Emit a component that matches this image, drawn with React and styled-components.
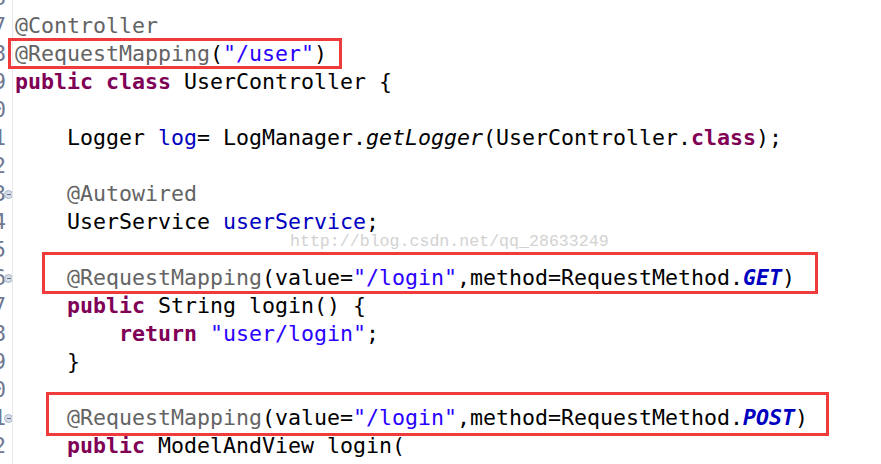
import React from "react";
import styled, { createGlobalStyle } from "styled-components";

const Global = createGlobalStyle`
  html, body { margin: 0; padding: 0; background: #ffffff; overflow: hidden; }
  #root { width: 881px; height: 464px; }
`;

const Editor = styled.div`
  position: relative;
  width: 881px;
  height: 464px;
  overflow: hidden;
  background: #ffffff;
  font-family: "DejaVu Sans Mono", "Liberation Mono", monospace;
  font-size: 21.6px;
`;

const Lines = styled.div`
  display: flex;
  flex-direction: column;
  margin-top: -16.5px;
`;

const Row = styled.div`
  display: flex;
  height: 28px;
  line-height: 28px;
`;

const Gutter = styled.div`
  position: relative;
  flex: 0 0 13px;
  display: flex;
  justify-content: flex-end;
  overflow: hidden;
  border-right: 1px solid #e8e8e8;
  padding-right: 6px;
  box-sizing: border-box;
  color: #6f7891;
`;

const LineNo = styled.span`
  flex: 0 0 auto;
`;

const Fold = styled.span`
  position: absolute;
  left: 4px;
  top: 10px;
  width: 7px;
  height: 7px;
  border-radius: 50%;
  background: #d6dde8;
  border: 1px solid #a9b6c9;
  &::after {
    content: "";
    position: absolute;
    left: 1.5px;
    right: 1.5px;
    top: 3px;
    height: 1px;
    background: #5f6f8a;
  }
`;

const Code = styled.div`
  padding-left: 2px;
  white-space: pre;
  color: #000000;
`;

const Tok = styled.span`
  color: ${(p) =>
    p.$k === "kw" ? "#7f0055" :
    p.$k === "ann" ? "#646464" :
    p.$k === "str" ? "#2a00ff" :
    p.$k === "field" || p.$k === "const" ? "#0000c0" : "#000000"};
  font-weight: ${(p) => (p.$k === "kw" || p.$k === "const" ? "bold" : "normal")};
  font-style: ${(p) => (p.$k === "it" || p.$k === "const" ? "italic" : "normal")};
`;

const Highlight = styled.div`
  position: absolute;
  box-sizing: border-box;
  border: 3px solid #ef3b3b;
  pointer-events: none;
`;

const Watermark = styled.div`
  position: absolute;
  left: 290px;
  top: 232px;
  font-family: "Liberation Mono", monospace;
  font-size: 16.6px;
  line-height: 20px;
  color: #d2d2d2;
  pointer-events: none;
`;

const lines = [
  { n: 6, t: [] },
  { n: 7, t: [["ann", "@Controller"]] },
  { n: 8, t: [["ann", "@RequestMapping"], ["", "("], ["str", "\"/user\""], ["", ")"]] },
  { n: 9, t: [["kw", "public"], ["", " "], ["kw", "class"], ["", " UserController {"]] },
  { n: 10, t: [] },
  {
    n: 11,
    t: [
      ["", "    Logger "], ["field", "log"], ["", "= LogManager."], ["it", "getLogger"],
      ["", "(UserController."], ["kw", "class"], ["", ");"],
    ],
  },
  { n: 12, t: [] },
  { n: 13, fold: true, t: [["", "    "], ["ann", "@Autowired"]] },
  { n: 14, t: [["", "    UserService "], ["field", "userService"], ["", ";"]] },
  { n: 15, t: [] },
  {
    n: 16,
    fold: true,
    t: [
      ["", "    "], ["ann", "@RequestMapping"], ["", "(value="], ["str", "\"/login\""],
      ["", ",method=RequestMethod."], ["const", "GET"], ["", ")"],
    ],
  },
  { n: 17, t: [["", "    "], ["kw", "public"], ["", " String login() {"]] },
  { n: 18, t: [["", "        "], ["kw", "return"], ["", " "], ["str", "\"user/login\""], ["", ";"]] },
  { n: 19, t: [["", "    }"]] },
  { n: 20, t: [] },
  {
    n: 21,
    fold: true,
    t: [
      ["", "    "], ["ann", "@RequestMapping"], ["", "(value="], ["str", "\"/login\""],
      ["", ",method=RequestMethod."], ["const", "POST"], ["", ")"],
    ],
  },
  { n: 22, t: [["", "    "], ["kw", "public"], ["", " ModelAndView login("]] },
  { n: 23, t: [] },
];

const boxes = [
  { left: 8, top: 38, width: 334, height: 31 },
  { left: 42, top: 252, width: 776, height: 42 },
  { left: 46, top: 392, width: 783, height: 44 },
];

export default function App() {
  return (
    <>
      <Global />
      <Editor>
        <Lines>
          {lines.map((l) => (
            <Row key={l.n}>
              <Gutter>
                <LineNo>{l.n}</LineNo>
                {l.fold && <Fold />}
              </Gutter>
              <Code>
                {l.t.map(([k, s], i) => (
                  <Tok key={i} $k={k}>{s}</Tok>
                ))}
              </Code>
            </Row>
          ))}
        </Lines>
        <Watermark>http://blog.csdn.net/qq_28633249</Watermark>
        {boxes.map((b, i) => (
          <Highlight
            key={i}
            style={{ left: b.left, top: b.top, width: b.width, height: b.height }}
          />
        ))}
      </Editor>
    </>
  );
}
